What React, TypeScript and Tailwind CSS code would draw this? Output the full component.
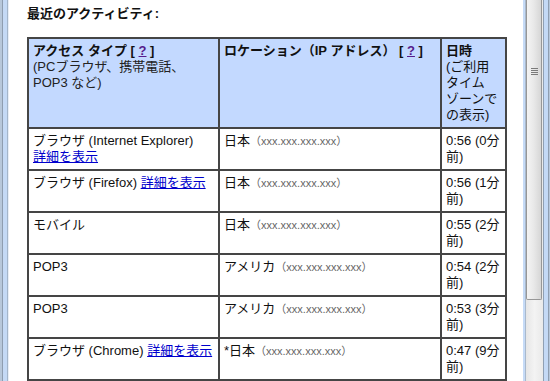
const ip = "xxx.xxx.xxx.xxx";

type Row = {
  type: React.ReactNode;
  place: string;
  time: string;
  ago: string;
};

function Detail() {
  return <a className="text-[#0000cc] underline">詳細を表示</a>;
}

function Place({ name }: { name: string }) {
  return (
    <>
      {name}
      <span className="text-[11px] text-[#666]">（{ip}）</span>
    </>
  );
}

const rows: Row[] = [
  {
    type: (
      <>
        ブラウザ (Internet Explorer)
        <br />
        <Detail />
      </>
    ),
    place: "日本",
    time: "0:56 (0分",
    ago: "前)",
  },
  {
    type: (
      <>
        ブラウザ (Firefox) <Detail />
      </>
    ),
    place: "日本",
    time: "0:56 (1分",
    ago: "前)",
  },
  { type: "モバイル", place: "日本", time: "0:55 (2分", ago: "前)" },
  { type: "POP3", place: "アメリカ", time: "0:54 (2分", ago: "前)" },
  { type: "POP3", place: "アメリカ", time: "0:53 (3分", ago: "前)" },
  {
    type: (
      <>
        ブラウザ (Chrome) <Detail />
      </>
    ),
    place: "*日本",
    time: "0:47 (9分",
    ago: "前)",
  },
];

function Help() {
  return (
    <>
      {" "}
      [ <a className="text-[#551a8b] underline">?</a> ]
    </>
  );
}

function Scrollbar() {
  return (
    <div className="flex h-full w-[17px] flex-col bg-gradient-to-r from-[#e6e6e6] via-[#f3f3f3] to-[#e9e9e9]">
      <div className="flex h-[300px] w-[16px] flex-col items-center rounded-b-[2px] border border-t-0 border-[#979797] bg-gradient-to-r from-[#f4f4f4] via-[#e8e8e8] to-[#d6d6d6]">
        <div className="mt-[68px] flex flex-col gap-[1px]">
          <div className="h-[1px] w-[7px] bg-[#7a7a7a]" />
          <div className="h-[1px] w-[7px] bg-[#7a7a7a]" />
          <div className="h-[1px] w-[7px] bg-[#7a7a7a]" />
          <div className="h-[1px] w-[7px] bg-[#7a7a7a]" />
        </div>
      </div>
    </div>
  );
}

export default function App() {
  const cell = "border-2 border-[#454545] px-[4px] pt-[4px] pb-[4px] align-top";
  return (
    <div
      className="flex h-[381px] w-[550px] overflow-hidden bg-white text-[13px] leading-[16px] text-[#111]"
      style={{ fontFamily: '"Liberation Sans", Arial, "Noto Sans CJK JP", sans-serif' }}
    >
      <div className="flex h-full w-[9px] shrink-0">
        <div className="w-[2px] bg-[#b7c7da]" />
        <div className="w-[1px] bg-[#8e9db0]" />
        <div className="w-[4px] bg-[#c4d9f5]" />
        <div className="w-[1px] bg-[#a3b5ca]" />
        <div className="w-[1px] bg-[#e8eef6]" />
      </div>

      <div className="h-full w-[514px] shrink-0 pl-[18px] pt-[6px]">
        <div className="font-bold">最近のアクティビティ:</div>
        <table className="mt-[15px] w-[478px] table-fixed border-collapse">
          <colgroup>
            <col className="w-[191px]" />
            <col className="w-[222px]" />
            <col className="w-[65px]" />
          </colgroup>
          <thead>
            <tr className="bg-[#c3d9ff]">
              <th className={`${cell} text-left font-normal`}>
                <span className="font-bold">
                  アクセス タイプ
                  <Help />
                </span>
                <br />
                <span className="text-[#222]">(PCブラウザ、携帯電話、
                  <br />
                  POP3 など)</span>
              </th>
              <th className={`${cell} text-left font-bold`}>
                ロケーション（IP アドレス）
                <Help />
              </th>
              <th className={`${cell} text-left font-normal`}>
                <span className="font-bold">日時</span>
                <br />
                (ご利用
                <br />
                タイム
                <br />
                ゾーンで
                <br />
                の表示)
              </th>
            </tr>
          </thead>
          <tbody>
            {rows.map((r, i) => (
              <tr key={i}>
                <td className={`${cell} whitespace-nowrap`}>{r.type}</td>
                <td className={`${cell} whitespace-nowrap`}>
                  <Place name={r.place} />
                </td>
                <td className={`${cell} whitespace-nowrap`}>
                  {r.time}
                  <br />
                  {r.ago}
                </td>
              </tr>
            ))}
          </tbody>
        </table>
      </div>

      <div className="flex h-full shrink-0">
        <div className="w-[2px] bg-[#c6dbf7]" />
        <div className="w-[1px] bg-[#a9b9cc]" />
        <Scrollbar />
        <div className="w-[1px] bg-[#8f9fb3]" />
        <div className="w-[4px] bg-[#c4d9f5]" />
        <div className="w-[1px] bg-[#8e9db0]" />
        <div className="w-[1px] bg-[#b7c7da]" />
      </div>
    </div>
  );
}
